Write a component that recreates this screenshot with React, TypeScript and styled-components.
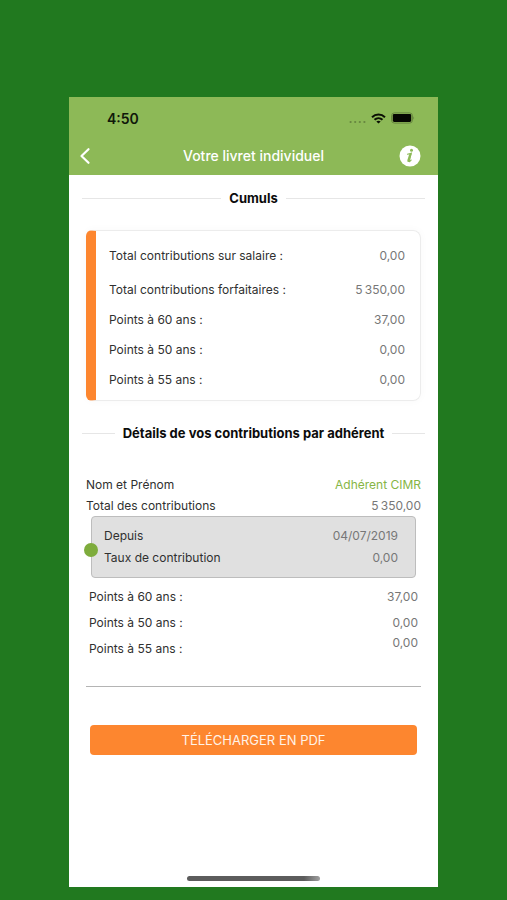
import React from "react";
import styled, { createGlobalStyle } from "styled-components";

const GlobalStyle = createGlobalStyle`
  *, *::before, *::after { box-sizing: border-box; }
  body { margin: 0; background: #21791f; font-family: Inter, "Liberation Sans", sans-serif; }
`;

const Stage = styled.div`
  display: flex;
  min-height: 100vh;
  padding: 97px 69px 13px;
  background: #21791f;
`;

const Phone = styled.div`
  display: flex;
  flex: 1;
  flex-direction: column;
  min-width: 0;
  background: #fff;
`;

const Header = styled.header`
  padding-bottom: 2px;
  background: #8db957;
`;

const StatusBar = styled.div`
  display: flex;
  align-items: center;
  justify-content: space-between;
  height: 42px;
  padding: 0 23px 0 38px;
`;

const Clock = styled.span`
  color: #10180a;
  font-size: 14px;
  font-weight: 600;
`;

const StatusIcons = styled.div`
  display: flex;
  align-items: center;
  gap: 5px;
`;

const NavBar = styled.div`
  display: grid;
  grid-template-columns: 32px 1fr 32px;
  align-items: center;
  height: 34px;
  padding-right: 12px;
`;

const IconButton = styled.button`
  display: flex;
  align-items: center;
  justify-content: center;
  height: 32px;
  padding: 0;
  border: 0;
  background: none;
  cursor: pointer;
`;

const PageTitle = styled.h1`
  margin: 0;
  padding-left: 12px;
  color: #fff;
  font-size: 14px;
  font-weight: 500;
  line-height: 18px;
  text-align: center;
`;

const Content = styled.main`
  flex: 1;
  padding: 0 17px;
`;

const SectionTitle = styled.h2`
  display: flex;
  align-items: center;
  gap: 8px;
  height: 46px;
  margin: 0 -4px;
  color: #0c0c0c;
  font-size: 13px;
  font-weight: 700;
  line-height: 16px;
  white-space: nowrap;

  &::before,
  &::after {
    content: "";
    flex: 1;
    height: 1px;
    background: #e6e6e6;
  }
`;

const SummaryCard = styled.dl`
  margin: 9px 0;
  padding: 10px 15px 5px 13px;
  border: 1px solid #ececec;
  border-left: 10px solid #fd862f;
  border-radius: 6px 8px 8px 6px;
  box-shadow: 0 0 8px rgba(0, 0, 0, 0.03);
`;

const List = styled.dl<{ $inset?: boolean }>`
  margin: ${(p) => (p.$inset ? "6px 3px 24px" : "18px 0 0")};
`;

const Row = styled.div<{ $height: number; $after?: number; $top?: boolean }>`
  display: flex;
  align-items: center;
  justify-content: space-between;
  height: ${(p) => p.$height}px;
  margin-bottom: ${(p) => p.$after ?? 0}px;

  dd {
    align-self: ${(p) => (p.$top ? "flex-start" : "center")};
  }
`;

const Label = styled.dt`
  color: #303030;
  font-size: 12px;
  line-height: 14px;
`;

const Value = styled.dd<{ $accent?: boolean }>`
  margin: 0;
  color: ${(p) => (p.$accent ? "#86b545" : "#777")};
  font-size: 12px;
  line-height: 14px;
`;

const PeriodBox = styled.dl`
  position: relative;
  margin: 0 5px;
  padding: 8px 17px 8px 12px;
  border: 1px solid #bdbdbd;
  border-radius: 4px;
  background: #e0e0e0;

  &::before {
    content: "";
    position: absolute;
    top: 26px;
    left: -8px;
    width: 14px;
    height: 14px;
    border-radius: 50%;
    background: #7eac3c;
  }
`;

const Divider = styled.hr`
  height: 1px;
  margin: 0 0 38px;
  border: 0;
  background: #b4b4b4;
`;

const DownloadButton = styled.button`
  display: block;
  width: calc(100% - 8px);
  height: 30px;
  margin: 0 4px;
  padding: 0;
  border: 0;
  border-radius: 4px;
  background: #fd862f;
  color: #fff3e8;
  font: 400 13px Inter, "Liberation Sans", sans-serif;
  cursor: pointer;
`;

const HomeIndicator = styled.div`
  width: 133px;
  height: 5px;
  margin: 24px auto 6px;
  border-radius: 3px;
  background: linear-gradient(90deg, #5c5c5c 88%, #a0a0a0);
`;

const summary = [
  { label: "Total contributions sur salaire :", value: "0,00", after: 4 },
  { label: "Total contributions forfaitaires :", value: "5\u2009350,00" },
  { label: "Points à 60 ans :", value: "37,00" },
  { label: "Points à 50 ans :", value: "0,00" },
  { label: "Points à 55 ans :", value: "0,00" },
];

const points = [
  { label: "Points à 60 ans :", value: "37,00" },
  { label: "Points à 50 ans :", value: "0,00" },
  { label: "Points à 55 ans :", value: "0,00", top: true },
];

function StatusGlyphs() {
  return (
    <StatusIcons aria-hidden="true">
      <svg width="17" height="12" viewBox="0 0 17 12" fill="#66843f">
        <circle cx="1.6" cy="10" r="1.1" />
        <circle cx="6.2" cy="10" r="1.1" />
        <circle cx="10.8" cy="10" r="1.1" />
        <circle cx="15.4" cy="10" r="1.1" />
      </svg>
      <svg width="15" height="11" viewBox="0 0 15 11" fill="none" stroke="#0b1004" strokeWidth="2">
        <path d="M1 4.2C4.7 .6 10.3 .6 14 4.2" />
        <path d="M3.5 6.8C5.8 4.7 9.2 4.7 11.5 6.8" />
        <path d="M7.5 10.6L5.3 8.5Q7.5 6.8 9.7 8.5Z" fill="#0b1004" stroke="none" />
      </svg>
      <svg width="24" height="12" viewBox="0 0 24 12">
        <rect x=".6" y=".9" width="20.8" height="10.2" rx="2.8" fill="none" stroke="#66843f" strokeWidth="1" />
        <rect x="1.8" y="2" width="18.4" height="8" rx="1.4" fill="#050702" />
        <path d="M22.3 4.3Q24 6 22.3 7.7Z" fill="#66843f" />
      </svg>
    </StatusIcons>
  );
}

export default function App() {
  return (
    <>
      <GlobalStyle />
      <Stage>
        <Phone>
          <Header>
            <StatusBar>
              <Clock>4:50</Clock>
              <StatusGlyphs />
            </StatusBar>
            <NavBar>
              <IconButton type="button" aria-label="Retour">
                <svg width="12" height="18" viewBox="0 0 12 18" fill="none" stroke="#fff" strokeWidth="2.2" strokeLinecap="round" strokeLinejoin="round">
                  <path d="M9.5 2.2L2.5 9L9.5 15.8" />
                </svg>
              </IconButton>
              <PageTitle>Votre livret individuel</PageTitle>
              <IconButton type="button" aria-label="Informations">
                <svg width="22" height="22" viewBox="0 0 22 22">
                  <circle cx="11" cy="11" r="10.5" fill="#fff" />
                  <circle cx="12.5" cy="5.2" r="1.5" fill="#8db957" />
                  <path d="M8.2 9.3Q10.4 9 12.2 8.3L10.2 15.5Q9.9 16.9 10.6 16.5Q11.3 16.1 12.4 14.6" fill="none" stroke="#8db957" strokeWidth="1.2" />
                  <path d="M10.2 9.2L12.8 8.2L10.7 15.4Q10.4 17.1 9.2 17.1Q7.9 16.9 8.4 15.1Z" fill="#8db957" />
                </svg>
              </IconButton>
            </NavBar>
          </Header>

          <Content>
            <SectionTitle>Cumuls</SectionTitle>
            <SummaryCard>
              {summary.map((item) => (
                <Row key={item.label} $height={30} $after={item.after}>
                  <Label>{item.label}</Label>
                  <Value>{item.value}</Value>
                </Row>
              ))}
            </SummaryCard>

            <SectionTitle>Détails de vos contributions par adhérent</SectionTitle>
            <List>
              <Row $height={21}>
                <Label>Nom et Prénom</Label>
                <Value $accent>Adhérent CIMR</Value>
              </Row>
              <Row $height={21}>
                <Label>Total des contributions</Label>
                <Value>5&#8201;350,00</Value>
              </Row>
            </List>
            <PeriodBox>
              <Row $height={22}>
                <Label>Depuis</Label>
                <Value>04/07/2019</Value>
              </Row>
              <Row $height={22}>
                <Label>Taux de contribution</Label>
                <Value>0,00</Value>
              </Row>
            </PeriodBox>
            <List $inset>
              {points.map((item) => (
                <Row key={item.label} $height={26} $top={item.top}>
                  <Label>{item.label}</Label>
                  <Value>{item.value}</Value>
                </Row>
              ))}
            </List>
            <Divider />
            <DownloadButton type="button">TÉLÉCHARGER EN PDF</DownloadButton>
          </Content>
          <HomeIndicator />
        </Phone>
      </Stage>
    </>
  );
}
